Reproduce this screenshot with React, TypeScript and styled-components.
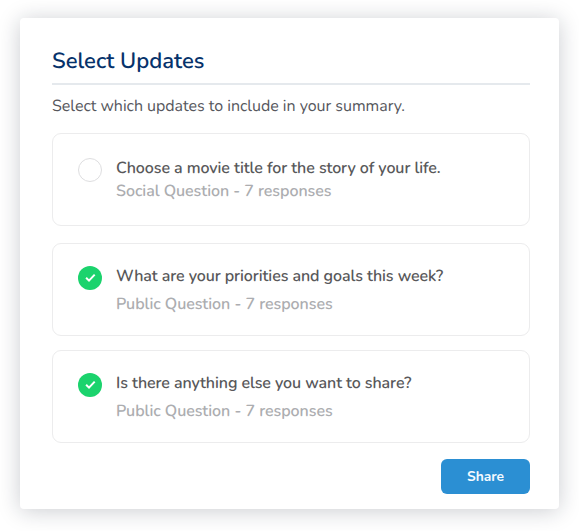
import React from "react";
import styled, { createGlobalStyle } from "styled-components";

const GlobalStyle = createGlobalStyle`
  *, *::before, *::after { box-sizing: border-box; }
  body {
    margin: 0;
    background: #fff;
    font-family: Nunito, "Noto Sans", sans-serif;
    -webkit-font-smoothing: antialiased;
    text-rendering: geometricPrecision;
    overflow: hidden;
  }
`;

const Page = styled.main`
  height: 531px;
  padding: 18px 20px 22px;
`;

const Panel = styled.section`
  display: flex;
  flex-direction: column;
  width: 539px;
  height: 491px;
  padding: 26px 29px 15px 32px;
  border-radius: 4px;
  background: #fff;
  box-shadow: 0 2px 22px rgba(20, 28, 45, 0.22);
`;

const Title = styled.h1`
  height: 41px;
  margin: 0;
  border-bottom: 2px solid #e5e9ed;
  color: #06326b;
  font-size: 22px;
  font-weight: 600;
  line-height: 35px;
  white-space: nowrap;
`;

const Intro = styled.p`
  height: 48px;
  margin: 0;
  color: #56575d;
  font-size: 16px;
  line-height: 43px;
  letter-spacing: -0.035px;
  white-space: nowrap;
`;

const List = styled.ul`
  margin: 0;
  padding: 0;
  list-style: none;
`;

const Option = styled.li<{ $gap: number; $top: number }>`
  display: flex;
  gap: 14px;
  height: 93px;
  margin-bottom: ${(p) => p.$gap}px;
  padding: ${(p) => p.$top}px 25px 0;
  border: 1px solid #ececed;
  border-radius: 9px;
`;

const Toggle = styled.button<{ $checked: boolean }>`
  display: grid;
  flex: none;
  place-items: center;
  width: 24px;
  height: 24px;
  padding: 0;
  border: ${(p) => (p.$checked ? "0" : "1px solid #dedee0")};
  border-radius: 50%;
  background: ${(p) => (p.$checked ? "#1bd36d" : "#fff")};
`;

const Copy = styled.div`
  margin-top: -1px;
  font-size: 16px;
  font-weight: 600;
  line-height: 23px;
  white-space: nowrap;
`;

const Question = styled.div`
  color: #58585a;
  letter-spacing: -0.085px;
`;

const Meta = styled.div<{ $offset: number }>`
  margin-top: ${(p) => p.$offset}px;
  color: #acadb0;
  letter-spacing: -0.055px;
`;

const ShareButton = styled.button`
  align-self: flex-end;
  width: 89px;
  height: 35px;
  margin-top: 16px;
  padding: 0;
  border: 0;
  border-radius: 6px;
  background: #2b8fd3;
  color: #f4faff;
  font: 700 13.8px/35px Nunito, "Noto Sans", sans-serif;
`;

const Check = () => (
  <svg width="24" height="24" viewBox="0 0 24 24" fill="none" aria-hidden="true">
    <path d="M8.1 11.8 11 14.6 16.7 8.6" stroke="#fff" strokeWidth="2" />
  </svg>
);

const updates = [
  { question: "Choose a movie title for the story of your life.", meta: "Social Question - 7 responses", checked: false, gap: 17, top: 24, offset: 0 },
  { question: "What are your priorities and goals this week?", meta: "Public Question - 7 responses", checked: true, gap: 14, top: 22, offset: 5 },
  { question: "Is there anything else you want to share?", meta: "Public Question - 7 responses", checked: true, gap: 0, top: 22, offset: 5 },
];

export default function App() {
  return (
    <>
      <GlobalStyle />
      <Page>
        <Panel>
          <Title>Select Updates</Title>
          <Intro>Select which updates to include in your summary.</Intro>
          <List>
            {updates.map((u) => (
              <Option key={u.question} $gap={u.gap} $top={u.top}>
                <Toggle type="button" role="checkbox" aria-checked={u.checked} aria-label={u.question} $checked={u.checked}>
                  {u.checked && <Check />}
                </Toggle>
                <Copy>
                  <Question>{u.question}</Question>
                  <Meta $offset={u.offset}>{u.meta}</Meta>
                </Copy>
              </Option>
            ))}
          </List>
          <ShareButton type="button">Share</ShareButton>
        </Panel>
      </Page>
    </>
  );
}
